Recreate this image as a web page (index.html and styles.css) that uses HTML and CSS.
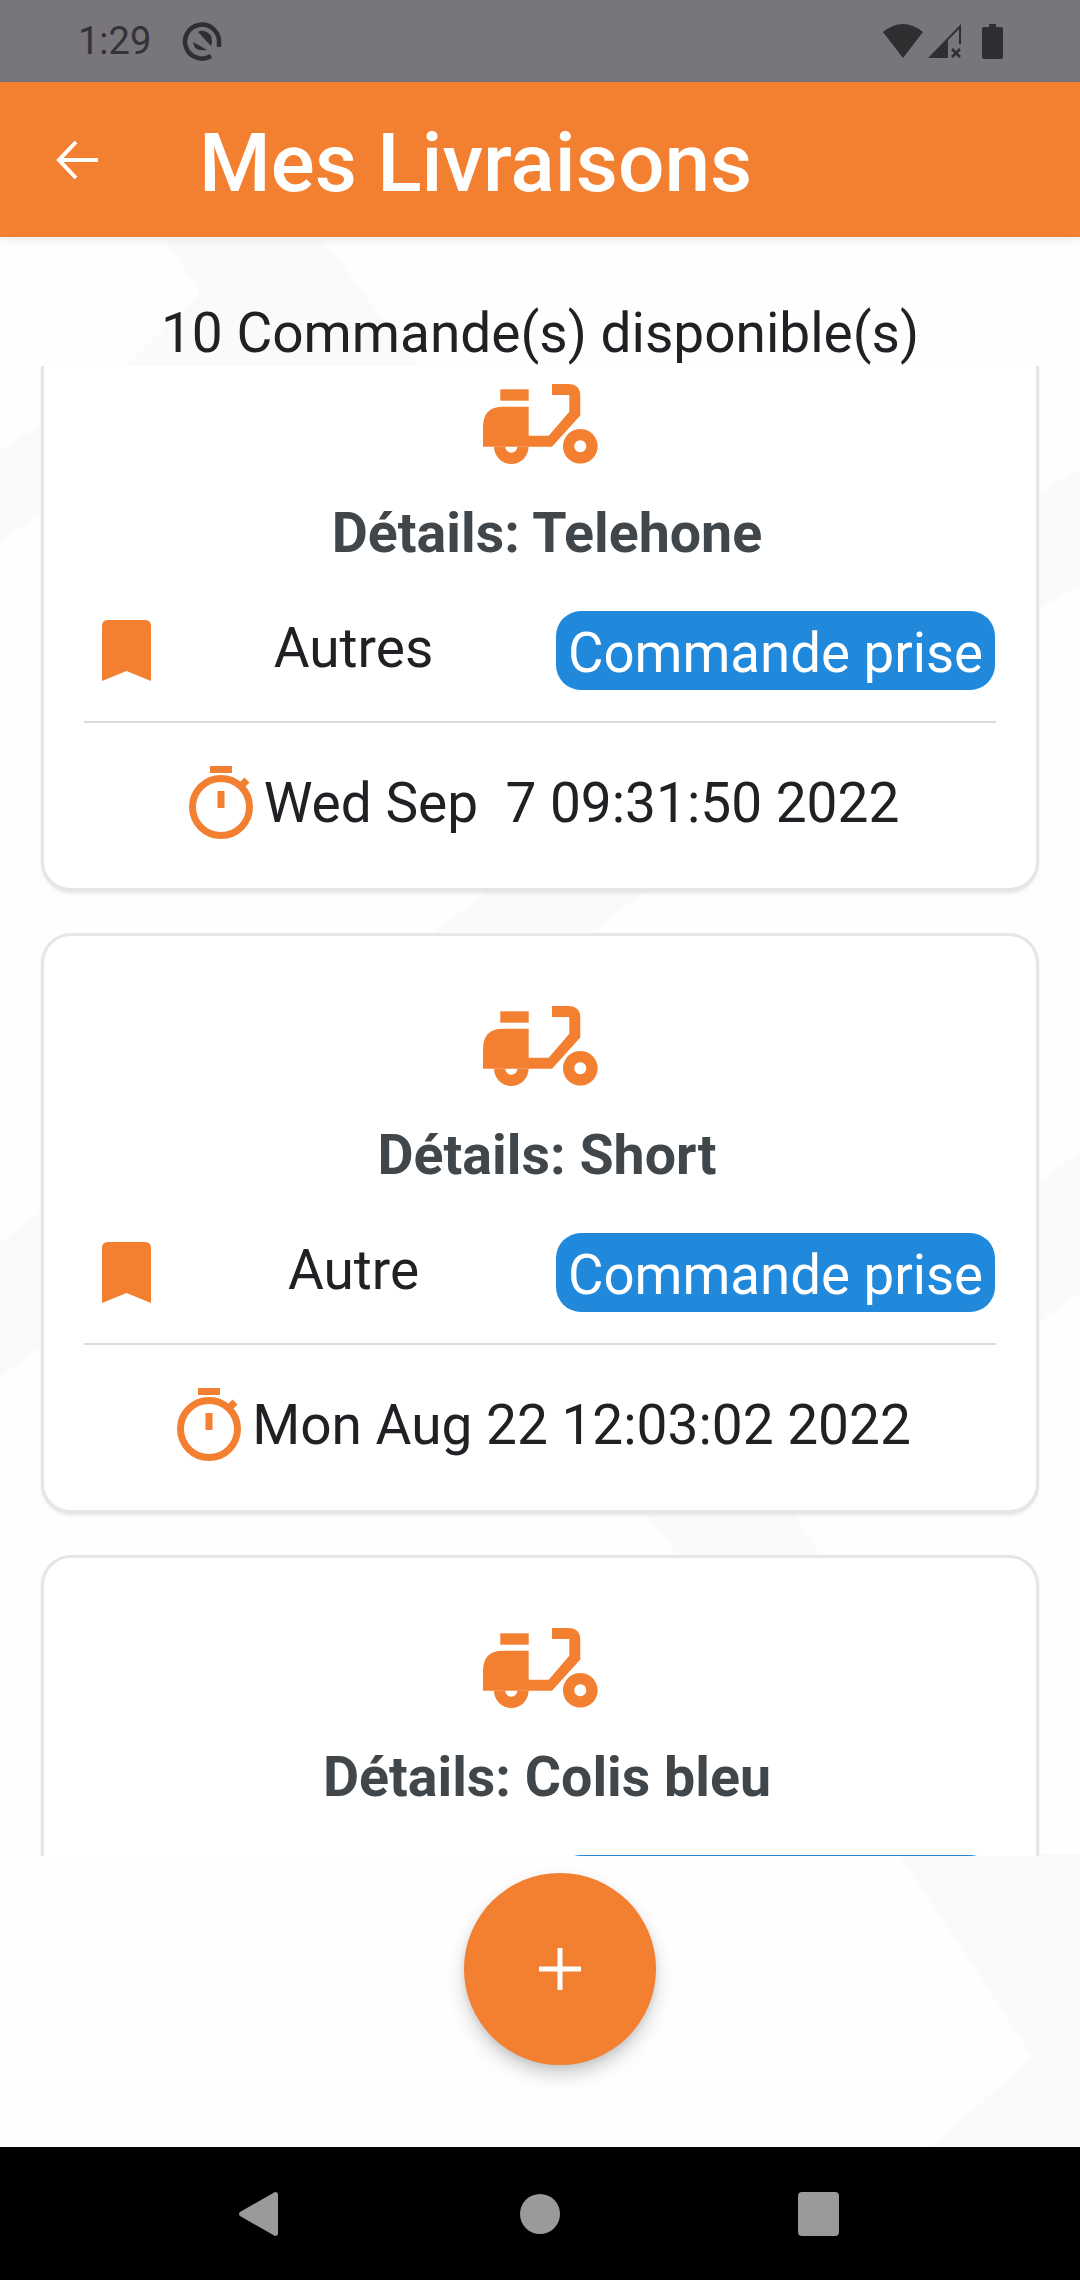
FILE: index.html
```html
<!DOCTYPE html>
<html lang="fr">
<head>
<meta charset="utf-8">
<title>Mes Livraisons</title>
<link rel="stylesheet" href="styles.css">
</head>
<body>
<div class="phone">
  <div class="statusbar">
    <div class="status-left">
      <span class="clock">1:29</span>
      <svg class="q-icon" viewBox="0 0 40 40"><path d="M29 35A17 17 0 1 1 37 20V26" fill="none" stroke="#2f2e31" stroke-width="4.500"/><path d="M16 11Q19 9 22 10Q30 12 30 20Q30 23 29 25Z" fill="#2f2e31"/><path d="M11 21L13 27Q17 30 25 29Z" fill="#2f2e31"/></svg>
    </div>
    <div class="status-right">
      <svg class="wifi" viewBox="0 0 40 34"><path d="M0 8Q20-8 40 8L20 34Z" fill="#2f2e31"/></svg>
      <svg class="signal" viewBox="0 0 33 34"><path d="M33 0V20H31V5L20 16V34H0Z" fill="#2f2e31"/><path d="M24 25l8 8M32 25l-8 8" stroke="#2f2e31" stroke-width="2.600"/></svg>
      <svg class="battery" viewBox="0 0 21 35"><path d="M7 0H14V3H19Q21 3 21 5V33Q21 35 19 35H2Q0 35 0 33V5Q0 3 2 3H7Z" fill="#2f2e31"/></svg>
    </div>
  </div>
  <header class="appbar">
    <svg class="back" viewBox="0 0 44 44"><path d="M22 4L5 22 22 40M5 22H44" fill="none" stroke="#fff" stroke-width="4"/></svg>
    <h1 class="title">Mes Livraisons</h1>
  </header>
  <main class="content">
    <svg class="watermark" viewBox="0 0 1080 1910" preserveAspectRatio="none">
      <path d="M165 3L200 56 127 128H417L324 3Z"/>
      <path d="M0 213L60 177V262L0 305Z"/>
      <path d="M0 1006L60 960V1095L0 1140Z"/>
      <path d="M1020 268L1080 232V347L1020 384Z"/>
      <path d="M1020 960L1080 915V1055L1020 1100Z"/>
      <path d="M489 653H647L592 695H434Z"/>
      <path d="M647 1278H795L820 1318H678Z"/>
      <path d="M899 1617H1080V1910H930L1033 1820Z"/>
    </svg>
    <p class="counter">10 Commande(s) disponible(s)</p>
    <section class="list">
      <article class="card first">
        <svg class="scooter" viewBox="0 0 115 80"><use href="#scoot"/></svg>
        <h2 class="details">Détails: Telehone</h2>
        <div class="row">
          <svg class="bookmark" viewBox="0 0 49 61"><use href="#mark"/></svg>
          <span class="kind">Autres</span>
          <span class="pill">Commande prise</span>
        </div>
        <hr class="rule">
        <div class="when">
          <svg class="timer" viewBox="0 0 64 73"><use href="#stopw"/></svg>
          <span class="date">Wed Sep&nbsp; 7 09:31:50 2022</span>
        </div>
      </article>
      <article class="card">
        <svg class="scooter" viewBox="0 0 115 80"><use href="#scoot"/></svg>
        <h2 class="details">Détails: Short</h2>
        <div class="row">
          <svg class="bookmark" viewBox="0 0 49 61"><use href="#mark"/></svg>
          <span class="kind">Autre</span>
          <span class="pill">Commande prise</span>
        </div>
        <hr class="rule">
        <div class="when">
          <svg class="timer" viewBox="0 0 64 73"><use href="#stopw"/></svg>
          <span class="date">Mon Aug 22 12:03:02 2022</span>
        </div>
      </article>
      <article class="card">
        <svg class="scooter" viewBox="0 0 115 80"><use href="#scoot"/></svg>
        <h2 class="details">Détails: Colis bleu</h2>
        <div class="row">
          <span class="pill"></span>
        </div>
      </article>
    </section>
    <div class="fab-zone">
      <button class="fab"><svg class="plus" viewBox="0 0 42 42"><path d="M21 0V42M0 21H42" stroke="#fff" stroke-width="5"/></svg></button>
    </div>
  </main>
  <nav class="navbar">
    <svg class="nav-back" viewBox="0 0 40 44"><path d="M37 0Q40 0 40 3V41Q40 44 37 44L2 24Q0 22 2 20Z" fill="#9b9a9b"/></svg>
    <span class="nav-home"></span>
    <span class="nav-recent"></span>
  </nav>
</div>
<svg class="defs" width="0" height="0">
  <defs>
    <g id="scoot" fill="#f37f30">
      <path d="M17.300 5.300H45.700V16.700H17.300Z"/>
      <path d="M0 62.700V43Q0 22.700 20 22.700H45.700V51.700H65.700L86.300 27.700V11H69V0H85Q97.300 0 97.300 12V31.500L69 62.700Z"/>
      <path d="M11 62.700a17.300 17.300 0 0 0 34.600 0H34.300a6 6 0 0 1-12 0Z"/>
      <path fill-rule="evenodd" d="M97.300 45a17.300 17.300 0 1 0 .01 0ZM97.300 56.300a6 6 0 1 1-.01 0Z"/>
    </g>
    <g id="mark" fill="#f37f30">
      <path d="M6 0H43Q49 0 49 6V61L24.500 51 0 61V6Q0 0 6 0Z"/>
    </g>
    <g id="stopw" fill="none" stroke="#f37f30">
      <path d="M21 3.500H43" stroke-width="7"/>
      <circle cx="32" cy="41" r="28.500" stroke-width="7"/>
      <path d="M32 25V42" stroke-width="7"/>
      <path d="M51 21L58 14" stroke-width="7"/>
    </g>
  </defs>
</svg>
</body>
</html>
```
FILE: styles.css
```css
* { box-sizing: border-box; }
html, body { margin: 0; padding: 0; }
body { font-family: Roboto, "Noto Sans", sans-serif; background: #fff; }
.phone { width: 1080px; height: 2280px; display: flex; flex-direction: column; overflow: hidden; }
.defs { position: absolute; }

.statusbar { height: 82px; background: #78767a; display: flex; justify-content: space-between; align-items: center; padding: 0 77px 0 78px; flex: none; }
.status-left { display: flex; align-items: center; gap: 31px; }
.clock { font-size: 38px; color: #333236; }
.q-icon { width: 40px; height: 40px; }
.status-right { display: flex; align-items: center; }
.wifi { width: 40px; height: 34px; }
.signal { width: 33px; height: 34px; margin-left: 5px; }
.battery { width: 21px; height: 35px; margin-left: 21px; }

.appbar { height: 155px; background: #f37f30; display: flex; align-items: center; padding-left: 53px; flex: none; position: relative; z-index: 2; box-shadow: 0 3px 8px rgba(0,0,0,.08); }
.back { width: 46px; height: 44px; flex: none; }
.title { margin: 6px 0 0 100px; font-size: 82px; font-weight: 500; color: #fff; line-height: 1; }

.content { flex: 1; position: relative; display: flex; flex-direction: column; background: #fefefe; min-height: 0; }
.watermark { position: absolute; inset: 0; width: 100%; height: 100%; fill: #fafafb; }
.counter { position: relative; margin: 0; height: 129px; padding-top: 68px; text-align: center; font-size: 55px; line-height: 56px; color: #202124; }
.list { position: relative; height: 1490px; flex: none; overflow: hidden; padding: 0 41px; display: flex; flex-direction: column; gap: 41px; }

.card { flex: none; height: 581px; background: #fff; border: 3px solid #e4e6e8; border-bottom-width: 4px; border-radius: 30px; box-shadow: 0 2px 3px rgba(0,0,0,.07); display: flex; flex-direction: column; align-items: center; padding: 70px 40px 0; }
.card.first { margin-top: -55px; }
.scooter { width: 115px; height: 80px; flex: none; }
.details { margin: 41px 0 0 14px; font-size: 55.500px; line-height: 58px; font-weight: 700; color: #40464a; text-align: center; white-space: nowrap; }
.row { align-self: stretch; display: flex; align-items: center; justify-content: flex-end; margin-top: 48px; height: 79px; padding-right: 1px; }
.bookmark { width: 49px; height: 61px; flex: none; margin-left: 18px; }
.kind { flex: 1; text-align: center; font-size: 55px; color: #202124; position: relative; top: -3px; }
.pill { flex: none; width: 439px; height: 79px; padding-top: 6px; background: #2189dc; color: #fff; font-size: 54.6px; line-height: 73px; text-align: center; border-radius: 25px; white-space: nowrap; }
.rule { align-self: stretch; width: 100%; height: 2px; margin: 31px 0 0; border: 0; background: #dcdcdc; flex: none; }
.when { display: flex; align-items: center; justify-content: center; gap: 11px; margin: 43px 0 0 8px; }
.timer { width: 64px; height: 73px; flex: none; }
.date { font-size: 55px; color: #202124; white-space: nowrap; }

.fab-zone { flex: 1; position: relative; display: flex; justify-content: center; padding: 17px 0 0 40px; }
.fab { width: 192px; height: 192px; padding: 0; border: 0; border-radius: 50%; background: #f37f30; display: flex; align-items: center; justify-content: center; box-shadow: 0 10px 18px rgba(0,0,0,.18), 0 3px 6px rgba(0,0,0,.08); }
.plus { width: 42px; height: 42px; }

.navbar { height: 133px; background: #000; flex: none; position: relative; z-index: 2; display: flex; align-items: center; }
.nav-back { width: 40px; height: 44px; margin-left: 238px; }
.nav-home { width: 40px; height: 40px; border-radius: 50%; background: #9b9a9b; margin-left: 242px; }
.nav-recent { width: 41px; height: 44px; border-radius: 4px; background: #9b9a9b; margin-left: 238px; }
```
